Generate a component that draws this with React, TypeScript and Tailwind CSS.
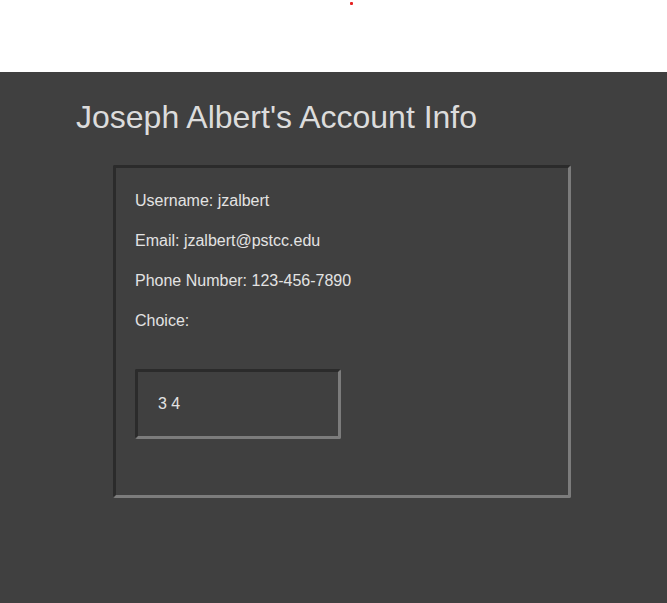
export default function App() {
  return (
    <div className="min-h-screen flex flex-col bg-white font-['Liberation_Sans',Arial,sans-serif]">
      {/* top strip */}
      <div className="h-[72px] flex justify-center">
        <div className="w-[3px] h-[3px] rounded-[1px] bg-[#e52222] mt-[2px] ml-[35px]" />
      </div>

      <main className="flex-1 bg-[#404040] text-[#e3e3e3] pb-[100px]">
        <h1 className="ml-[76px] mt-[27px] text-[32px] leading-[37px] text-[#dcdcdc]">
          Joseph Albert's Account Info
        </h1>

        <div className="ml-[113px] mt-[29px] w-[458px] rounded-[2px] border-[3px] border-t-[#2b2b2b] border-l-[#2b2b2b] border-b-[#7c7c7c] border-r-[#7c7c7c] pt-[21px] pb-[56px] px-[19px] text-base leading-6">
          <p>Username: jzalbert</p>
          <p className="mt-4">Email: jzalbert@pstcc.edu</p>
          <p className="mt-4">Phone Number: 123-456-7890</p>
          <p className="mt-4">Choice:</p>

          <div className="mt-[36px] w-[206px] h-[70px] flex items-center rounded-[2px] border-[3px] border-t-[#2b2b2b] border-l-[#2b2b2b] border-b-[#7c7c7c] border-r-[#7c7c7c] pl-[20px]">
            3 4
          </div>
        </div>
      </main>
    </div>
  );
}
